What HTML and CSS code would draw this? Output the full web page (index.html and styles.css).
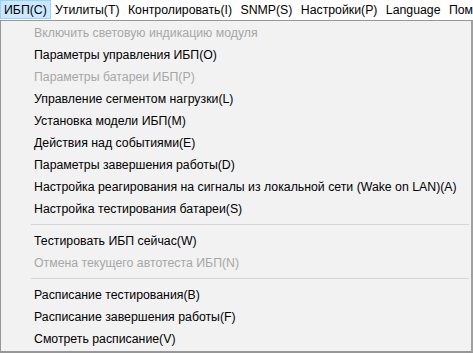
FILE: index.html
```html
<!DOCTYPE html>
<html>
<head>
<meta charset="utf-8">
<link rel="stylesheet" href="styles.css">
</head>
<body>
<div class="menubar">
  <span class="mitem active">ИБП(C)</span>
  <span class="mitem">Утилиты(T)</span>
  <span class="mitem">Контролировать(I)</span>
  <span class="mitem">SNMP(S)</span>
  <span class="mitem">Настройки(P)</span>
  <span class="mitem">Language</span>
  <span class="mitem">Помощь(H)</span>
</div>
<div class="popup">
  <div class="item disabled">Включить световую индикацию модуля</div>
  <div class="item">Параметры управления ИБП(O)</div>
  <div class="item disabled">Параметры батареи ИБП(P)</div>
  <div class="item">Управление сегментом нагрузки(L)</div>
  <div class="item">Установка модели ИБП(M)</div>
  <div class="item">Действия над событиями(E)</div>
  <div class="item">Параметры завершения работы(D)</div>
  <div class="item">Настройка реагирования на сигналы из локальной сети (Wake on LAN)(A)</div>
  <div class="item">Настройка тестирования батареи(S)</div>
  <div class="sep"></div>
  <div class="item">Тестировать ИБП сейчас(W)</div>
  <div class="item disabled">Отмена текущего автотеста ИБП(N)</div>
  <div class="sep"></div>
  <div class="item">Расписание тестирования(B)</div>
  <div class="item">Расписание завершения работы(F)</div>
  <div class="item">Смотреть расписание(V)</div>
</div>
</body>
</html>
```

FILE: styles.css
```css
html, body {
  margin: 0;
  padding: 0;
  background: #ffffff;
  overflow: hidden;
}
body {
  font-family: "Liberation Sans", Arial, sans-serif;
  font-size: 12.3px;
  color: #000;
  width: 473px;
  height: 353px;
}
.menubar {
  display: flex;
  height: 20px;
  background: #ffffff;
  white-space: nowrap;
  overflow: hidden;
}
.mitem {
  display: flex;
  align-items: center;
  padding: 0 3.2px;
  height: 19px;
  border: 1px solid transparent;
  box-sizing: border-box;
  flex: none;
}
.mitem.active {
  background: #cce8ff;
  border-color: #99d1ff;
  padding: 0 3px 0 3px;
}
.popup {
  box-sizing: border-box;
  width: 473px;
  height: 333px;
  background: #f2f2f2;
  border: 1px solid #979797;
  border-right-width: 2px;
  border-bottom-width: 2px;
  border-right-color: #a0a0a0;
  padding: 1px 0 0 0;
  display: flex;
  flex-direction: column;
}
.item {
  height: 22px;
  line-height: 22px;
  padding-left: 33px;
  white-space: nowrap;
  flex: none;
}
.item.disabled {
  color: #a7a7a7;
}
.sep {
  flex: none;
  margin-left: 30px;
  margin-right: 2px;
  box-sizing: border-box;
  border-bottom: 1px solid #d5d5d5;
  height: 5px;
  margin-bottom: 5px;
}
```
